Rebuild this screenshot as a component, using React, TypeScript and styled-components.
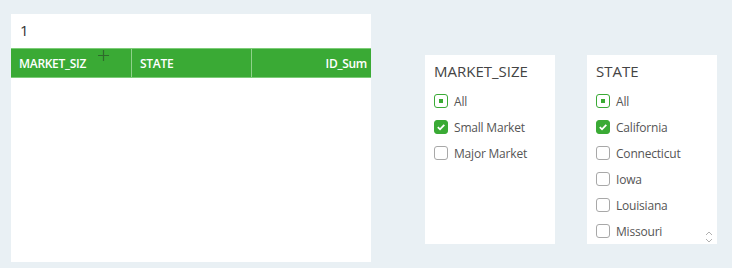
import React from 'react';
import styled, { createGlobalStyle } from 'styled-components';

const GlobalStyle = createGlobalStyle`
    html, body {
        margin: 0;
        padding: 0;
        background: #e9f0f4;
        font-family: "Open Sans", "Noto Sans", sans-serif;
    }
`

const Page = styled.div`
    width: 732px;
    height: 268px;
    display: flex;
    align-items: flex-start;
    padding: 14px 0 0 11px;
    box-sizing: border-box;
`
const TablePanel = styled.div`
    width: 360px;
    height: 248px;
    background: white;
    display: flex;
    flex-direction: column;
`
const TableTitle = styled.div`
    height: 34px;
    padding: 6px 0 0 9px;
    box-sizing: border-box;
    font-size: 15px;
    color: #333;
`
const HeaderRow = styled.div`
    display: grid;
    grid-template-columns: 120px 120px 120px;
    height: 30px;
    background: #3aaa35;
    border-top: 1px solid #7ccc77;
    border-bottom: 1px solid #7ccc77;
    box-sizing: border-box;
`
const HeaderCell = styled.div<{ $right?: boolean; $first?: boolean }>`
    position: relative;
    display: flex;
    align-items: center;
    justify-content: ${p => p.$right ? 'flex-end' : 'flex-start'};
    padding: 0 4px 0 8px;
    border-left: ${p => p.$first ? 'none' : '1px solid #8fd18a'};
    color: white;
    font-size: 12px;
    font-weight: 600;
    letter-spacing: -0.3px;
`
const Plus = styled.span`
    position: absolute;
    left: 87px;
    top: 1px;
    display: flex;
`
const Slicer = styled.div<{ $ml: number }>`
    width: 130px;
    height: 189px;
    margin-top: 41px;
    margin-left: ${p => p.$ml}px;
    background: white;
    padding: 6px 0 0 9px;
    box-sizing: border-box;
    position: relative;
`
const SlicerTitle = styled.div`
    font-size: 15px;
    color: #444;
    height: 27px;
`
const Item = styled.div`
    display: flex;
    align-items: center;
    gap: 6px;
    height: 26px;
    font-size: 12px;
    color: #555;
    letter-spacing: -0.2px;
`
const Box = styled.span<{ $state: 'all' | 'on' | 'off' }>`
    width: 14px;
    height: 14px;
    box-sizing: border-box;
    border-radius: 3px;
    display: flex;
    align-items: center;
    justify-content: center;
    border: 1px solid ${p => p.$state === 'off' ? '#a8a8a8' : '#3aaa35'};
    background: ${p => p.$state === 'on' ? '#3aaa35' : 'white'};
`
const Dot = styled.span`
    width: 4px;
    height: 4px;
    background: #3aaa35;
`
const Scroll = styled.div`
    position: absolute;
    right: 4px;
    bottom: 1px;
    display: flex;
`

const Check = () => (
    <svg width="10" height="10" viewBox="0 0 10 10">
        <path d="M1.8 5.2 L4 7.3 L8.3 2.8" stroke="white" strokeWidth="1.8" fill="none" />
    </svg>
)

type Opt = { label: string; state: 'all' | 'on' | 'off' };

const SlicerList: React.FC<{ title: string; items: Opt[]; ml: number; scroll?: boolean }> = ({ title, items, ml, scroll }) => (
    <Slicer $ml={ml}>
        <SlicerTitle>{title}</SlicerTitle>
        {items.map(i => (
            <Item key={i.label}>
                <Box $state={i.state}>
                    {i.state === 'all' && <Dot />}
                    {i.state === 'on' && <Check />}
                </Box>
                {i.label}
            </Item>
        ))}
        {scroll && (
            <Scroll>
                <svg width="8" height="12" viewBox="0 0 8 12">
                    <path d="M1 4 L4 1 L7 4 M1 8 L4 11 L7 8" stroke="#b0b0b0" strokeWidth="1" fill="none" />
                </svg>
            </Scroll>
        )}
    </Slicer>
)

export default function App() {
    return (
        <Page>
            <GlobalStyle />
            <TablePanel>
                <TableTitle>1</TableTitle>
                <HeaderRow>
                    <HeaderCell $first>
                        MARKET_SIZ
                        <Plus>
                            <svg width="11" height="11" viewBox="0 0 11 11">
                                <path d="M5.5 0 V11 M0 5.5 H11" stroke="#2f6a2c" strokeWidth="1.2" />
                            </svg>
                        </Plus>
                    </HeaderCell>
                    <HeaderCell>STATE</HeaderCell>
                    <HeaderCell $right>ID_Sum</HeaderCell>
                </HeaderRow>
            </TablePanel>
            <SlicerList
                title="MARKET_SIZE"
                ml={54}
                items={[
                    { label: 'All', state: 'all' },
                    { label: 'Small Market', state: 'on' },
                    { label: 'Major Market', state: 'off' },
                ]}
            />
            <SlicerList
                title="STATE"
                ml={32}
                scroll
                items={[
                    { label: 'All', state: 'all' },
                    { label: 'California', state: 'on' },
                    { label: 'Connecticut', state: 'off' },
                    { label: 'Iowa', state: 'off' },
                    { label: 'Louisiana', state: 'off' },
                    { label: 'Missouri', state: 'off' },
                ]}
            />
        </Page>
    );
}
